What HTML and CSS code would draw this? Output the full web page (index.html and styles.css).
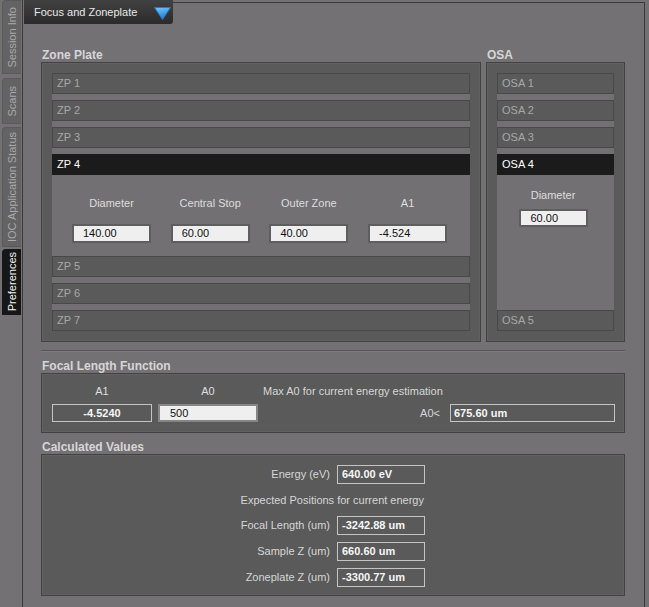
FILE: index.html
```html
<!DOCTYPE html>
<html>
<head>
<meta charset="utf-8">
<link rel="stylesheet" href="styles.css">
</head>
<body>
<div class="app">
  <nav class="tabs">
    <div class="tab t-session"><span>Session Info</span></div>
    <div class="tab t-scans"><span>Scans</span></div>
    <div class="tab t-ioc"><span>IOC Application Status</span></div>
    <div class="tab t-prefs active"><span>Preferences</span></div>
  </nav>
  <main class="frame">
    <div class="frame-top">
      <div class="dropdown">
        <span>Focus and Zoneplate</span>
        <svg class="caret" width="17" height="13" viewBox="0 0 17 13">
          <defs>
            <linearGradient id="cg" x1="0" y1="0" x2="0.3" y2="1">
              <stop offset="0" stop-color="#74c8ff"/>
              <stop offset="1" stop-color="#1783e2"/>
            </linearGradient>
          </defs>
          <polygon points="0.5,0.5 16.5,0.5 8.5,12.5" fill="url(#cg)" stroke="#2b78c4" stroke-width="1"/>
        </svg>
      </div>
      <div class="topline"></div>
    </div>
    <div class="content">
      <div class="columns">
        <section class="col col-zp">
          <h2 class="title">Zone Plate</h2>
          <div class="group">
            <div class="acc">
              <div class="row">ZP 1</div>
              <div class="row">ZP 2</div>
              <div class="row">ZP 3</div>
              <div class="row open">ZP 4</div>
              <div class="zp-panel">
                <div class="lbl">Diameter</div>
                <div class="lbl">Central Stop</div>
                <div class="lbl">Outer Zone</div>
                <div class="lbl">A1</div>
                <div class="inp">140.00</div>
                <div class="inp">60.00</div>
                <div class="inp">40.00</div>
                <div class="inp">-4.524</div>
              </div>
              <div class="row">ZP 5</div>
              <div class="row">ZP 6</div>
              <div class="row">ZP 7</div>
            </div>
          </div>
        </section>
        <section class="col col-osa">
          <h2 class="title">OSA</h2>
          <div class="group group-osa">
            <div class="acc acc-osa">
              <div class="row">OSA 1</div>
              <div class="row">OSA 2</div>
              <div class="row">OSA 3</div>
              <div class="row open">OSA 4</div>
              <div class="osa-panel">
                <div class="lbl">Diameter</div>
                <div class="inp inp-osa">60.00</div>
              </div>
              <div class="row">OSA 5</div>
            </div>
          </div>
        </section>
      </div>
      <div class="sep"></div>
      <h2 class="title title-gap">Focal Length Function</h2>
      <div class="group focal">
        <div class="lbl">A1</div>
        <div class="lbl">A0</div>
        <div class="lbl lbl-left">Max A0 for current energy estimation</div>
        <div class="out out-center">-4.5240</div>
        <div class="inp inp-a0">500</div>
        <div class="a0row"><span>A0&lt;</span><div class="out out-a0">675.60 um</div></div>
      </div>
      <h2 class="title title-gap">Calculated Values</h2>
      <div class="group calc">
        <div class="clbl">Energy (eV)</div>
        <div class="out">640.00 eV</div>
        <div class="cnote">Expected Positions for current energy</div>
        <div class="clbl">Focal Length (um)</div>
        <div class="out">-3242.88 um</div>
        <div class="clbl">Sample Z (um)</div>
        <div class="out">660.60 um</div>
        <div class="clbl">Zoneplate Z (um)</div>
        <div class="out">-3300.77 um</div>
      </div>
    </div>
  </main>
</div>
</body>
</html>
```
FILE: styles.css
```css
* { box-sizing: border-box; }

body {
  margin: 0;
  background: #737173;
  font: 11px "Liberation Sans", Arial, sans-serif;
  color: #d6d6d6;
}

.app {
  display: flex;
  height: 607px;
  overflow: hidden;
}

/* vertical tabs */
.tabs {
  width: 22px;
  flex: none;
  display: flex;
  flex-direction: column;
  padding-left: 2px;
}

.tab {
  width: 19px;
  display: flex;
  align-items: center;
  justify-content: center;
  background: #646364;
  border: 1px solid #5a595a;
  border-right: none;
  border-radius: 4px 0 0 0;
  color: #a9a9a9;
  font-size: 11px;
}

.tab span {
  writing-mode: vertical-rl;
  transform: rotate(180deg);
  white-space: nowrap;
}

.t-session { height: 74px; }
.t-scans { height: 46px; margin-top: 4px; }
.t-ioc { height: 120px; margin-top: 3px; }
.t-prefs { height: 66px; margin-top: 2px; }

.tab.active {
  background: #171717;
  border-color: #171717;
  color: #f2f2f2;
}

/* main frame */
.frame {
  flex: none;
  width: 623px;
  border-left: 1px solid #3a3a3a;
  display: flex;
  flex-direction: column;
}

.frame-top {
  display: flex;
  height: 24px;
  flex: none;
}

.dropdown {
  margin-left: 1px;
  width: 149px;
  height: 24px;
  background: linear-gradient(#414141, #2b2b2b);
  border-radius: 0 0 3px 0;
  display: flex;
  align-items: center;
  justify-content: space-between;
  padding: 0 2px 0 10px;
  color: #e8e8e8;
  font-size: 11px;
}

.caret { display: block; margin-top: 2px; }

.topline {
  flex: 1;
  margin-top: 2px;
  border-top: 1px solid #3a3a3a;
  border-right: 1px solid #3a3a3a;
}

.content {
  flex: 1;
  border-right: 1px solid #3a3a3a;
  padding: 24px 19px 0 18px;
}

.title {
  margin: 0;
  font-size: 12px;
  font-weight: bold;
  line-height: 14px;
  color: #d6d6d6;
  padding-left: 1px;
}

.title-gap { margin-top: 7px; }

.columns {
  display: flex;
  gap: 5px;
}

.col {
  display: flex;
  flex-direction: column;
}

.col-zp { width: 440px; flex: none; }
.col-osa { flex: 1; }

.group {
  background: #5a5a5a;
  border: 1px solid #424242;
  box-shadow: inset 0 0 0 1px #626162;
}

.col .group {
  padding: 10px;
  display: flex;
  flex-direction: column;
}

.group-osa { flex: 1; }

.acc {
  background: #727072;
  display: flex;
  flex-direction: column;
}

.acc-osa { flex: 1; }

.row {
  height: 21px;
  flex: none;
  border: 1px solid #484848;
  background: #5a5a5a;
  color: #a8a8a8;
  padding-left: 4px;
  line-height: 19px;
}

.row + .row { margin-top: 6px; }

.row.open {
  background: #1b1b1b;
  border-color: #1b1b1b;
  color: #ffffff;
}

.lbl {
  line-height: 14px;
  text-align: center;
  color: #dedede;
}

.inp {
  height: 19px;
  border: 2px solid #5f5e5f;
  background: #efefef;
  color: #111;
  padding-left: 9px;
  line-height: 15px;
}

.zp-panel {
  display: grid;
  grid-template-columns: repeat(4, 79px);
  column-gap: 19.7px;
  row-gap: 14px;
  padding: 21px 0 13px 20px;
}

.osa-panel {
  flex: 1;
  display: flex;
  flex-direction: column;
  align-items: center;
  gap: 7px;
  padding: 13px 5px 0 0;
}

.inp-osa {
  width: 69px;
  height: 18px;
  line-height: 14px;
  padding-left: 10px;
}

.sep {
  margin-top: 8px;
  border-top: 1px solid #555455;
  border-bottom: 1px solid #7e7c7e;
}

/* focal length */
.focal {
  display: grid;
  grid-template-columns: 100px 100px 1fr;
  column-gap: 6px;
  row-gap: 6px;
  padding: 10px 9px 10px 10px;
}

.lbl-left { text-align: left; color: #d6d6d6; margin-left: -1px; }

.out {
  height: 19px;
  border: 1px solid #c4c4c4;
  color: #f6f6f6;
  font-weight: bold;
  line-height: 17px;
  padding-left: 4px;
}

.focal .out { height: 18px; line-height: 16px; }

.out-center { text-align: center; padding-left: 0; }

.inp-a0 {
  height: 18px;
  border-color: #878687;
  padding-left: 10px;
  line-height: 14px;
}

.a0row {
  display: flex;
  justify-content: flex-end;
  align-items: center;
  gap: 10px;
  color: #d6d6d6;
}

.out-a0 { width: 165px; padding-left: 3px; }

/* calculated values */
.calc {
  display: grid;
  grid-template-columns: 1fr 88px;
  column-gap: 7px;
  row-gap: 7px;
  padding: 10px 199px 8px 10px;
}

.clbl {
  text-align: right;
  line-height: 19px;
  color: #d6d6d6;
}

.cnote {
  grid-column: 1 / -1;
  text-align: right;
  line-height: 18px;
  padding-right: 1px;
  color: #d6d6d6;
}
```
